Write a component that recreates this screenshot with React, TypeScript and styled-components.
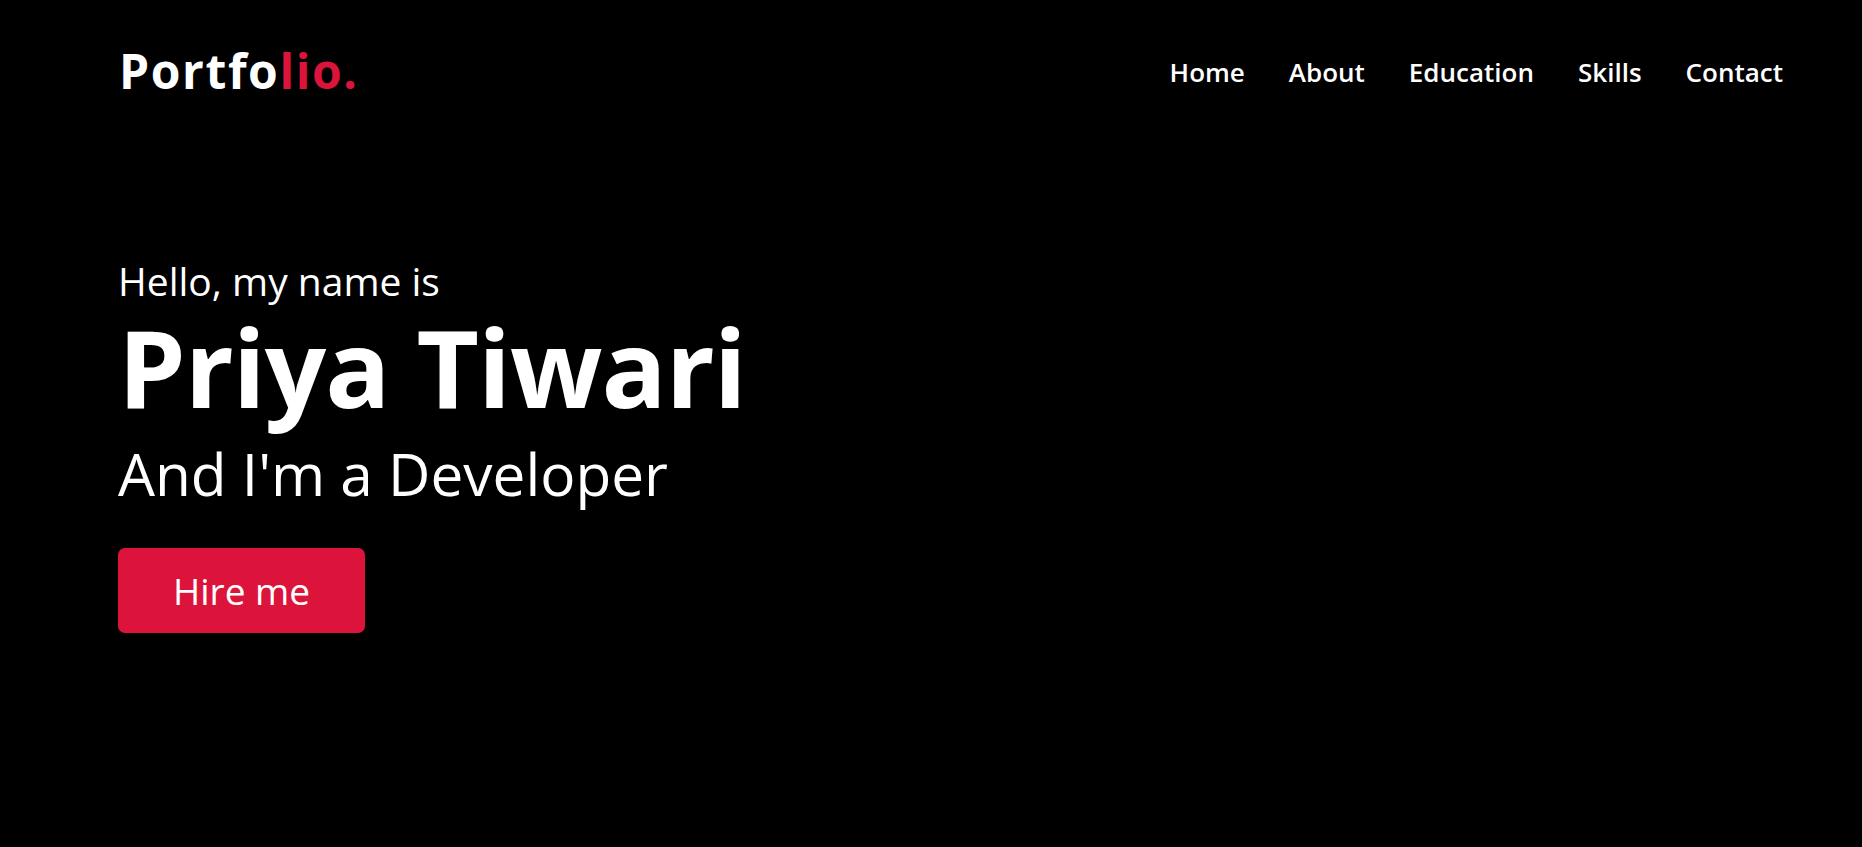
import React from "react";
import styled, { createGlobalStyle } from "styled-components";

const GlobalStyle = createGlobalStyle`
  * { box-sizing: border-box; margin: 0; padding: 0; }
  html, body { background: #000; }
  body { margin: 0; font-family: "Open Sans", "Noto Sans", sans-serif; color: #fff; }
`;

const Page = styled.div`
  width: 100%;
  min-height: 847px;
  background: #000;
  display: flex;
  flex-direction: column;
`;

const Header = styled.header`
  height: 142px;
  padding: 0 79px 0 119px;
  display: flex;
  align-items: center;
  justify-content: space-between;
`;

const Logo = styled.div`
  font-size: 48px;
  font-weight: 700;
  line-height: 1;
  letter-spacing: 1.6px;
  color: #fff;
`;

const Accent = styled.span`
  color: #dc143c;
`;

const Nav = styled.nav`
  display: flex;
  align-items: center;
  gap: 44px;
  padding-top: 2px;
`;

const NavLink = styled.a`
  font-size: 26px;
  font-weight: 600;
  color: #fff;
  text-decoration: none;
  line-height: 1;
`;

const Hero = styled.section`
  padding: 119px 0 0 118px;
  display: flex;
  flex-direction: column;
  align-items: flex-start;
`;

const Greeting = styled.p`
  font-size: 39px;
  font-weight: 400;
  line-height: 1;
`;

const Name = styled.h1`
  margin-top: 13px;
  font-size: 108px;
  font-weight: 700;
  line-height: 1;
  letter-spacing: -1px;
`;

const Role = styled.h2`
  margin-top: 23px;
  font-size: 58.5px;
  font-weight: 400;
  line-height: 1;
`;

const HireButton = styled.button`
  margin-top: 45px;
  width: 247px;
  height: 85px;
  border: none;
  border-radius: 7px;
  background: #dc143c;
  color: #fff;
  font-family: inherit;
  font-size: 37px;
  font-weight: 400;
  cursor: pointer;
`;

const navItems = ["Home", "About", "Education", "Skills", "Contact"];

export default function App() {
  return (
    <Page>
      <GlobalStyle />
      <Header>
        <Logo>
          Portfo<Accent>lio.</Accent>
        </Logo>
        <Nav>
          {navItems.map((n) => (
            <NavLink key={n} href="#">
              {n}
            </NavLink>
          ))}
        </Nav>
      </Header>
      <Hero>
        <Greeting>Hello, my name is</Greeting>
        <Name>Priya Tiwari</Name>
        <Role>And I'm a Developer</Role>
        <HireButton>Hire me</HireButton>
      </Hero>
    </Page>
  );
}
